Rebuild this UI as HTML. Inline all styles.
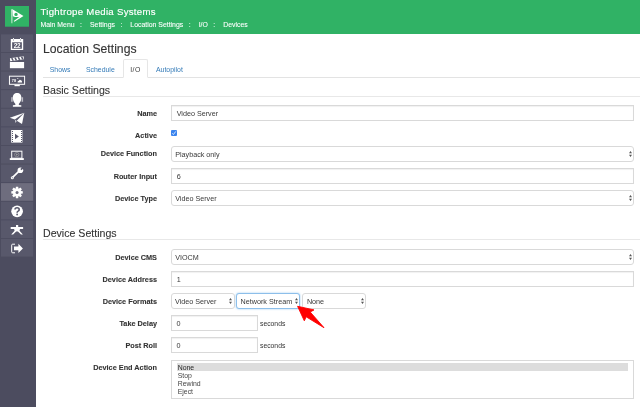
<!DOCTYPE html>
<html><head><meta charset="utf-8">
<style>
*{box-sizing:border-box;margin:0;padding:0}
html,body{width:640px;height:407px;overflow:hidden;background:#fff;font-family:"Liberation Sans",sans-serif;color:#333}
.abs{position:absolute}
#wrap{position:absolute;left:0;top:0;width:640px;height:407px;will-change:transform}
#side{position:absolute;left:0;top:0;width:36px;height:407px;background:#4c4c5f}
#hdr{position:absolute;left:36px;top:0;width:604px;height:33.5px;background:#30b265;color:#fff}
#hdr .t{position:absolute;left:4.5px;top:6.2px;font-size:9.6px;letter-spacing:0.3px;-webkit-text-stroke:0.15px;white-space:nowrap}
#hdr .bc{position:absolute;left:4.5px;top:20.8px;-webkit-text-stroke:0.08px;font-size:6.9px;white-space:nowrap}
#hdr .bc i{font-style:normal;margin:0 8px 0 5.5px}
h1{position:absolute;left:43px;top:42px;font-size:12.2px;-webkit-text-stroke:0.12px;font-weight:normal;white-space:nowrap;color:#333}
.tab{position:absolute;top:65.75px;font-size:6.9px;color:#337ab7;white-space:nowrap}
#tabline{position:absolute;left:43px;top:77.4px;width:597px;height:1px;background:#e3e3e3}
#active{position:absolute;left:123px;top:59px;width:25px;height:19.4px;border:1px solid #e6e6e6;border-bottom-color:#fff;background:#fff;border-radius:2px 2px 0 0}
h2{position:absolute;left:43px;font-size:10.6px;-webkit-text-stroke:0.1px;font-weight:normal;white-space:nowrap;color:#333}
.hl{position:absolute;left:43px;width:597px;height:1px;background:#e8e8e8}
.lbl{position:absolute;right:483px;font-size:7.3px;font-weight:bold;-webkit-text-stroke:0.1px;white-space:nowrap;color:#333;text-align:right;line-height:10px}
.inp{position:absolute;height:16px;border:1px solid #d9d9d9;background:#fff;font-size:7.2px;color:#383838;padding-left:5px;white-space:nowrap;box-shadow:inset 0 1px 1px rgba(0,0,0,.06);line-height:15px}
.sel{border-radius:3px;box-shadow:none;padding-left:3.5px}
.arr{position:absolute;right:1.2px;top:4.6px;width:3px;height:6px}
#chk{position:absolute;left:171px;top:129.9px;width:6px;height:6px;background:#3a84ee;border-radius:1px}
#chk svg{position:absolute;left:0;top:0}
.sec{position:absolute;left:260px;font-size:6.8px;color:#333;white-space:nowrap;line-height:10px}
#lst{position:absolute;left:170.7px;top:360px;width:463.4px;height:39.2px;border:1px solid #d9d9d9;padding:2.0px 5px 0 5px}
#lst .o{font-size:6.9px;line-height:8.2px;height:8.2px;color:#444;padding-left:1px;padding-top:0.6px}
#lst .o.on{background:#ddd;color:#222}
</style></head>
<body><div id="wrap">
<div id="side">
<svg class="abs" style="left:0;top:0" width="36" height="407"><rect x="1" y="34.30" width="32.2" height="17.7" fill="#58586b"/><rect x="1" y="52.90" width="32.2" height="17.7" fill="#58586b"/><rect x="1" y="71.50" width="32.2" height="17.7" fill="#58586b"/><rect x="1" y="90.10" width="32.2" height="17.7" fill="#58586b"/><rect x="1" y="108.70" width="32.2" height="17.7" fill="#58586b"/><rect x="1" y="127.30" width="32.2" height="17.7" fill="#58586b"/><rect x="1" y="145.90" width="32.2" height="17.7" fill="#58586b"/><rect x="1" y="164.50" width="32.2" height="17.7" fill="#58586b"/><rect x="1" y="183.10" width="32.2" height="17.7" fill="#6e6d7e"/><rect x="1" y="201.70" width="32.2" height="17.7" fill="#58586b"/><rect x="1" y="220.30" width="32.2" height="17.7" fill="#58586b"/><rect x="1" y="238.90" width="32.2" height="17.7" fill="#58586b"/>
<!-- logo -->
<rect x="5" y="6" width="24" height="20.7" fill="#30b265"/>
<path d="M11.3,9.2 L12.5,9.2 L12.3,23.2 L11.5,23.2Z" fill="#e8f6ec"/>
<path d="M12.4,9.3 L23.5,16.1 L14.4,21.7 L13.7,20.9 L19.6,16.7 Q16.2,17.6 12.9,16.2Z" fill="#fff"/>
<circle cx="16.0" cy="14.4" r="1.65" fill="#30b265"/>
<!-- calendar -->
<path d="M10.8,39 H23.2 V50 H10.8Z M12.15,42.3 V48.75 H21.85 V42.3Z" fill="#fff" fill-rule="evenodd"/>
<path d="M13.0,38.0 h0.9 v2.9 h-0.9z M20.0,38.0 h0.9 v2.9 h-0.9z" fill="#fff"/>
<path d="M13.1,39.3 h0.7 v1.5 h-0.7z M20.1,39.3 h0.7 v1.5 h-0.7z" fill="#8a8a98"/>
<text x="17.0" y="47.9" font-family="Liberation Sans" font-weight="bold" font-size="6.4" fill="#fff" text-anchor="middle" letter-spacing="-0.2">22</text>
<!-- clapper -->
<rect x="9.9" y="62" width="14.2" height="6.2" fill="#fff"/>
<path d="M9.9,58.3 L23.6,56.2 L24.0,59.3 L10.2,61.2Z" fill="#fff"/>
<path d="M11.00,58.13 L12.60,57.88 L13.90,60.64 L12.30,60.86Z M14.25,57.63 L15.85,57.38 L17.15,60.19 L15.55,60.41Z M17.50,57.13 L19.10,56.88 L20.40,59.73 L18.80,59.95Z M20.75,56.63 L22.35,56.38 L23.65,59.28 L22.05,59.50Z " fill="#58586b"/>
<!-- tv -->
<rect x="9.45" y="76.2" width="15.15" height="8.1" fill="none" stroke="#fff" stroke-width="1"/>
<rect x="14.5" y="84.8" width="5.3" height="1.4" fill="#fff"/>
<text x="11.8" y="82.3" font-family="Liberation Sans" font-weight="bold" font-size="3.8" fill="#fff">78</text>
<path d="M17.6,82.6 Q17.3,80.6 19.0,80.7 Q19.6,79.0 21.0,80.2 Q22.4,80.6 22.0,82.6Z" fill="#fff"/>
<circle cx="17.8" cy="78.4" r="0.5" fill="#fff"/>
<!-- headset -->
<path d="M17.1,93.1 C20.6,93.1 21.6,95.6 21.3,98.6 C21.1,101.4 19.6,103 18.8,104 L18.9,104.9 L21.3,105.3 L21.3,106.8 L12.9,106.8 L12.9,105.3 L15.3,104.9 L15.4,104 C14.6,103 13.1,101.4 12.9,98.6 C12.6,95.6 13.6,93.1 17.1,93.1Z" fill="#fff"/>
<path d="M11.2,97.3 h1.5 v4.4 h-1.5z M21.6,97.3 h1.5 v4.4 h-1.5z" fill="#fff" opacity="0.6"/>
<!-- plane -->
<path d="M9.8,117.8 L24.3,112.7 L14.8,119.6Z" fill="#fff"/>
<path d="M24.3,112.7 L22,123.9 L16.8,120.8Z" fill="#fff"/>
<path d="M15.0,119.7 L15.2,123 L16.9,121.1Z" fill="#c8c8d0"/>
<!-- film -->
<rect x="11.2" y="130" width="11.2" height="12.6" fill="#fff"/>
<path d="M12,131h1v1h-1z M21,131h1v1h-1z M12,133h1v1h-1z M21,133h1v1h-1z M12,135h1v1h-1z M21,135h1v1h-1z M12,137h1v1h-1z M21,137h1v1h-1z M12,139h1v1h-1z M21,139h1v1h-1z M12,141h1v1h-1z M21,141h1v1h-1z " fill="#58586b"/>
<path d="M15,133.7 L18.9,136.5 L15,139.3Z" fill="#58586b"/>
<!-- laptop -->
<rect x="11.7" y="151.2" width="10.2" height="7" fill="none" stroke="#fff" stroke-width="1"/>
<rect x="9.8" y="158.1" width="14" height="1.9" fill="#fff"/>
<circle cx="16.8" cy="154.6" r="2.2" fill="none" stroke="#aaa" stroke-width="0.6"/>
<path d="M16.2,153.4 L17.9,154.6 L16.2,155.8Z" fill="#aaa"/>
<!-- wrench -->
<path d="M12.6,177.4 L18.8,171.4" stroke="#fff" stroke-width="1.7"/>
<circle cx="12.3" cy="177.7" r="1.5" fill="#fff"/>
<circle cx="12.3" cy="177.7" r="0.55" fill="#58586b"/>
<circle cx="20.4" cy="170.2" r="2.8" fill="#fff"/>
<path d="M21.52,170.28 L20.32,169.08 L22.5,166.9 L23.7,168.1Z" fill="#58586b"/>
<!-- gear -->
<path d="M20.90,190.98 L22.79,191.26 L22.79,193.54 L20.90,193.82 L20.77,194.12 L21.91,195.65 L20.30,197.26 L18.77,196.12 L18.47,196.25 L18.19,198.14 L15.91,198.14 L15.63,196.25 L15.33,196.12 L13.80,197.26 L12.19,195.65 L13.33,194.12 L13.20,193.82 L11.31,193.54 L11.31,191.26 L13.20,190.98 L13.33,190.68 L12.19,189.15 L13.80,187.54 L15.33,188.68 L15.63,188.55 L15.91,186.66 L18.19,186.66 L18.47,188.55 L18.77,188.68 L20.30,187.54 L21.91,189.15 L20.77,190.68Z" fill="#fff"/>
<circle cx="17.05" cy="192.4" r="1.5" fill="#6e6d7e"/>
<!-- question -->
<circle cx="17.1" cy="211.3" r="5.85" fill="#fff"/>
<path d="M15.0,209.6 Q15.0,207.7 17.1,207.7 Q19.2,207.7 19.2,209.4 Q19.2,210.5 18.1,211.1 Q17.1,211.6 17.1,212.7" stroke="#58586b" stroke-width="1.6" fill="none"/>
<circle cx="17.1" cy="214.5" r="0.9" fill="#58586b"/>
<!-- person -->
<path d="M16,225.1 H18.2 V227 H23.1 V228.9 H20 L19.5,230.7 L22.9,234.6 H21 L17.9,231.6 H16.2 L13.1,234.6 H11.2 L14.6,230.7 L14.1,228.9 H10.7 V227 H16Z" fill="#fff"/>
<!-- signout -->
<path d="M15,244.2 H12.6 Q11.7,244.2 11.7,245.1 V251.9 Q11.7,252.8 12.6,252.8 H15" fill="none" stroke="#fff" stroke-width="1"/>
<path d="M14,246.6 H18.4 V243.8 L22.9,248.4 L18.4,253 V250.3 H14Z" fill="#fff"/>
</svg>
</div>
<div id="hdr">
  <div class="t">Tightrope Media Systems</div>
  <div class="bc">Main Menu<i>:</i>Settings<i>:</i>Location Settings<i>:</i>I/O<i>:</i>Devices</div>
</div>
<h1>Location Settings</h1>
<div id="tabline"></div>
<div id="active"></div>
<div class="tab" style="left:49.75px">Shows</div>
<div class="tab" style="left:86px">Schedule</div>
<div class="tab" style="left:130.2px;color:#3a3a3a;letter-spacing:0.5px">I/O</div>
<div class="tab" style="left:156px">Autopilot</div>
<h2 style="top:83.5px">Basic Settings</h2>
<div class="hl" style="top:96px"></div>
<h2 style="top:227px">Device Settings</h2>
<div class="hl" style="top:239px"></div>
<div class="lbl" style="top:108.70px">Name</div>
<div class="inp" style="left:170.7px;top:104.8px;width:463.40px;">Video Server</div>
<div class="lbl" style="top:130.70px">Active</div>
<div id="chk"><svg width="6" height="6" viewBox="0 0 6 6"><path d="M1.3 3.3L2.4 4.5L4.8 1.4" stroke="#fff" stroke-width="0.8" fill="none"/></svg></div>
<div class="lbl" style="top:149.40px">Device Function</div>
<div class="inp sel" style="left:170.7px;top:145.9px;width:463.40px;">Playback only<svg class="arr" viewBox="0 0 3 6"><path d="M1.5 0L3 2.3H0Z M1.5 6L3 3.7H0Z" fill="#555"/></svg></div>
<div class="lbl" style="top:171.60px">Router Input</div>
<div class="inp" style="left:170.7px;top:167.9px;width:463.40px;">6</div>
<div class="lbl" style="top:193.70px">Device Type</div>
<div class="inp sel" style="left:170.7px;top:189.9px;width:463.40px;">Video Server<svg class="arr" viewBox="0 0 3 6"><path d="M1.5 0L3 2.3H0Z M1.5 6L3 3.7H0Z" fill="#555"/></svg></div>
<div class="lbl" style="top:252.50px">Device CMS</div>
<div class="inp sel" style="left:170.7px;top:248.8px;width:463.40px;">VIOCM<svg class="arr" viewBox="0 0 3 6"><path d="M1.5 0L3 2.3H0Z M1.5 6L3 3.7H0Z" fill="#555"/></svg></div>
<div class="lbl" style="top:274.60px">Device Address</div>
<div class="inp" style="left:170.7px;top:270.8px;width:463.40px;">1</div>
<div class="lbl" style="top:296.80px">Device Formats</div>
<div class="inp sel" style="left:170.5px;top:292.8px;width:64.00px;">Video Server<svg class="arr" viewBox="0 0 3 6"><path d="M1.5 0L3 2.3H0Z M1.5 6L3 3.7H0Z" fill="#555"/></svg></div>
<div class="inp sel" style="left:236.1px;top:292.8px;width:64.00px;border-color:#8dbfea;box-shadow:0 0 2px rgba(102,175,233,.7)">Network Stream<svg class="arr" viewBox="0 0 3 6"><path d="M1.5 0L3 2.3H0Z M1.5 6L3 3.7H0Z" fill="#555"/></svg></div>
<div class="inp sel" style="left:302.4px;top:292.8px;width:63.30px;">None<svg class="arr" viewBox="0 0 3 6"><path d="M1.5 0L3 2.3H0Z M1.5 6L3 3.7H0Z" fill="#555"/></svg></div>
<div class="lbl" style="top:318.70px">Take Delay</div>
<div class="inp" style="left:170.6px;top:314.8px;width:87.60px;">0</div>
<div class="sec" style="top:318.5px">seconds</div>
<div class="lbl" style="top:340.80px">Post Roll</div>
<div class="inp" style="left:170.6px;top:336.9px;width:87.60px;">0</div>
<div class="sec" style="top:340.5px">seconds</div>
<div class="lbl" style="top:363.00px">Device End Action</div>
<div id="lst"><div class="o on">None</div><div class="o">Stop</div><div class="o">Rewind</div><div class="o">Eject</div></div>
<svg class="abs" style="left:0;top:0" width="640" height="407"><path d="M297.6 306.3 L314.0 309.9 L310.2 312.0 L324.0 327.7 L306.2 316.8 L304.3 320.8 Z" fill="#f00" stroke="#f00" stroke-width="0.9" stroke-linejoin="round"/></svg>
</div></body></html>
